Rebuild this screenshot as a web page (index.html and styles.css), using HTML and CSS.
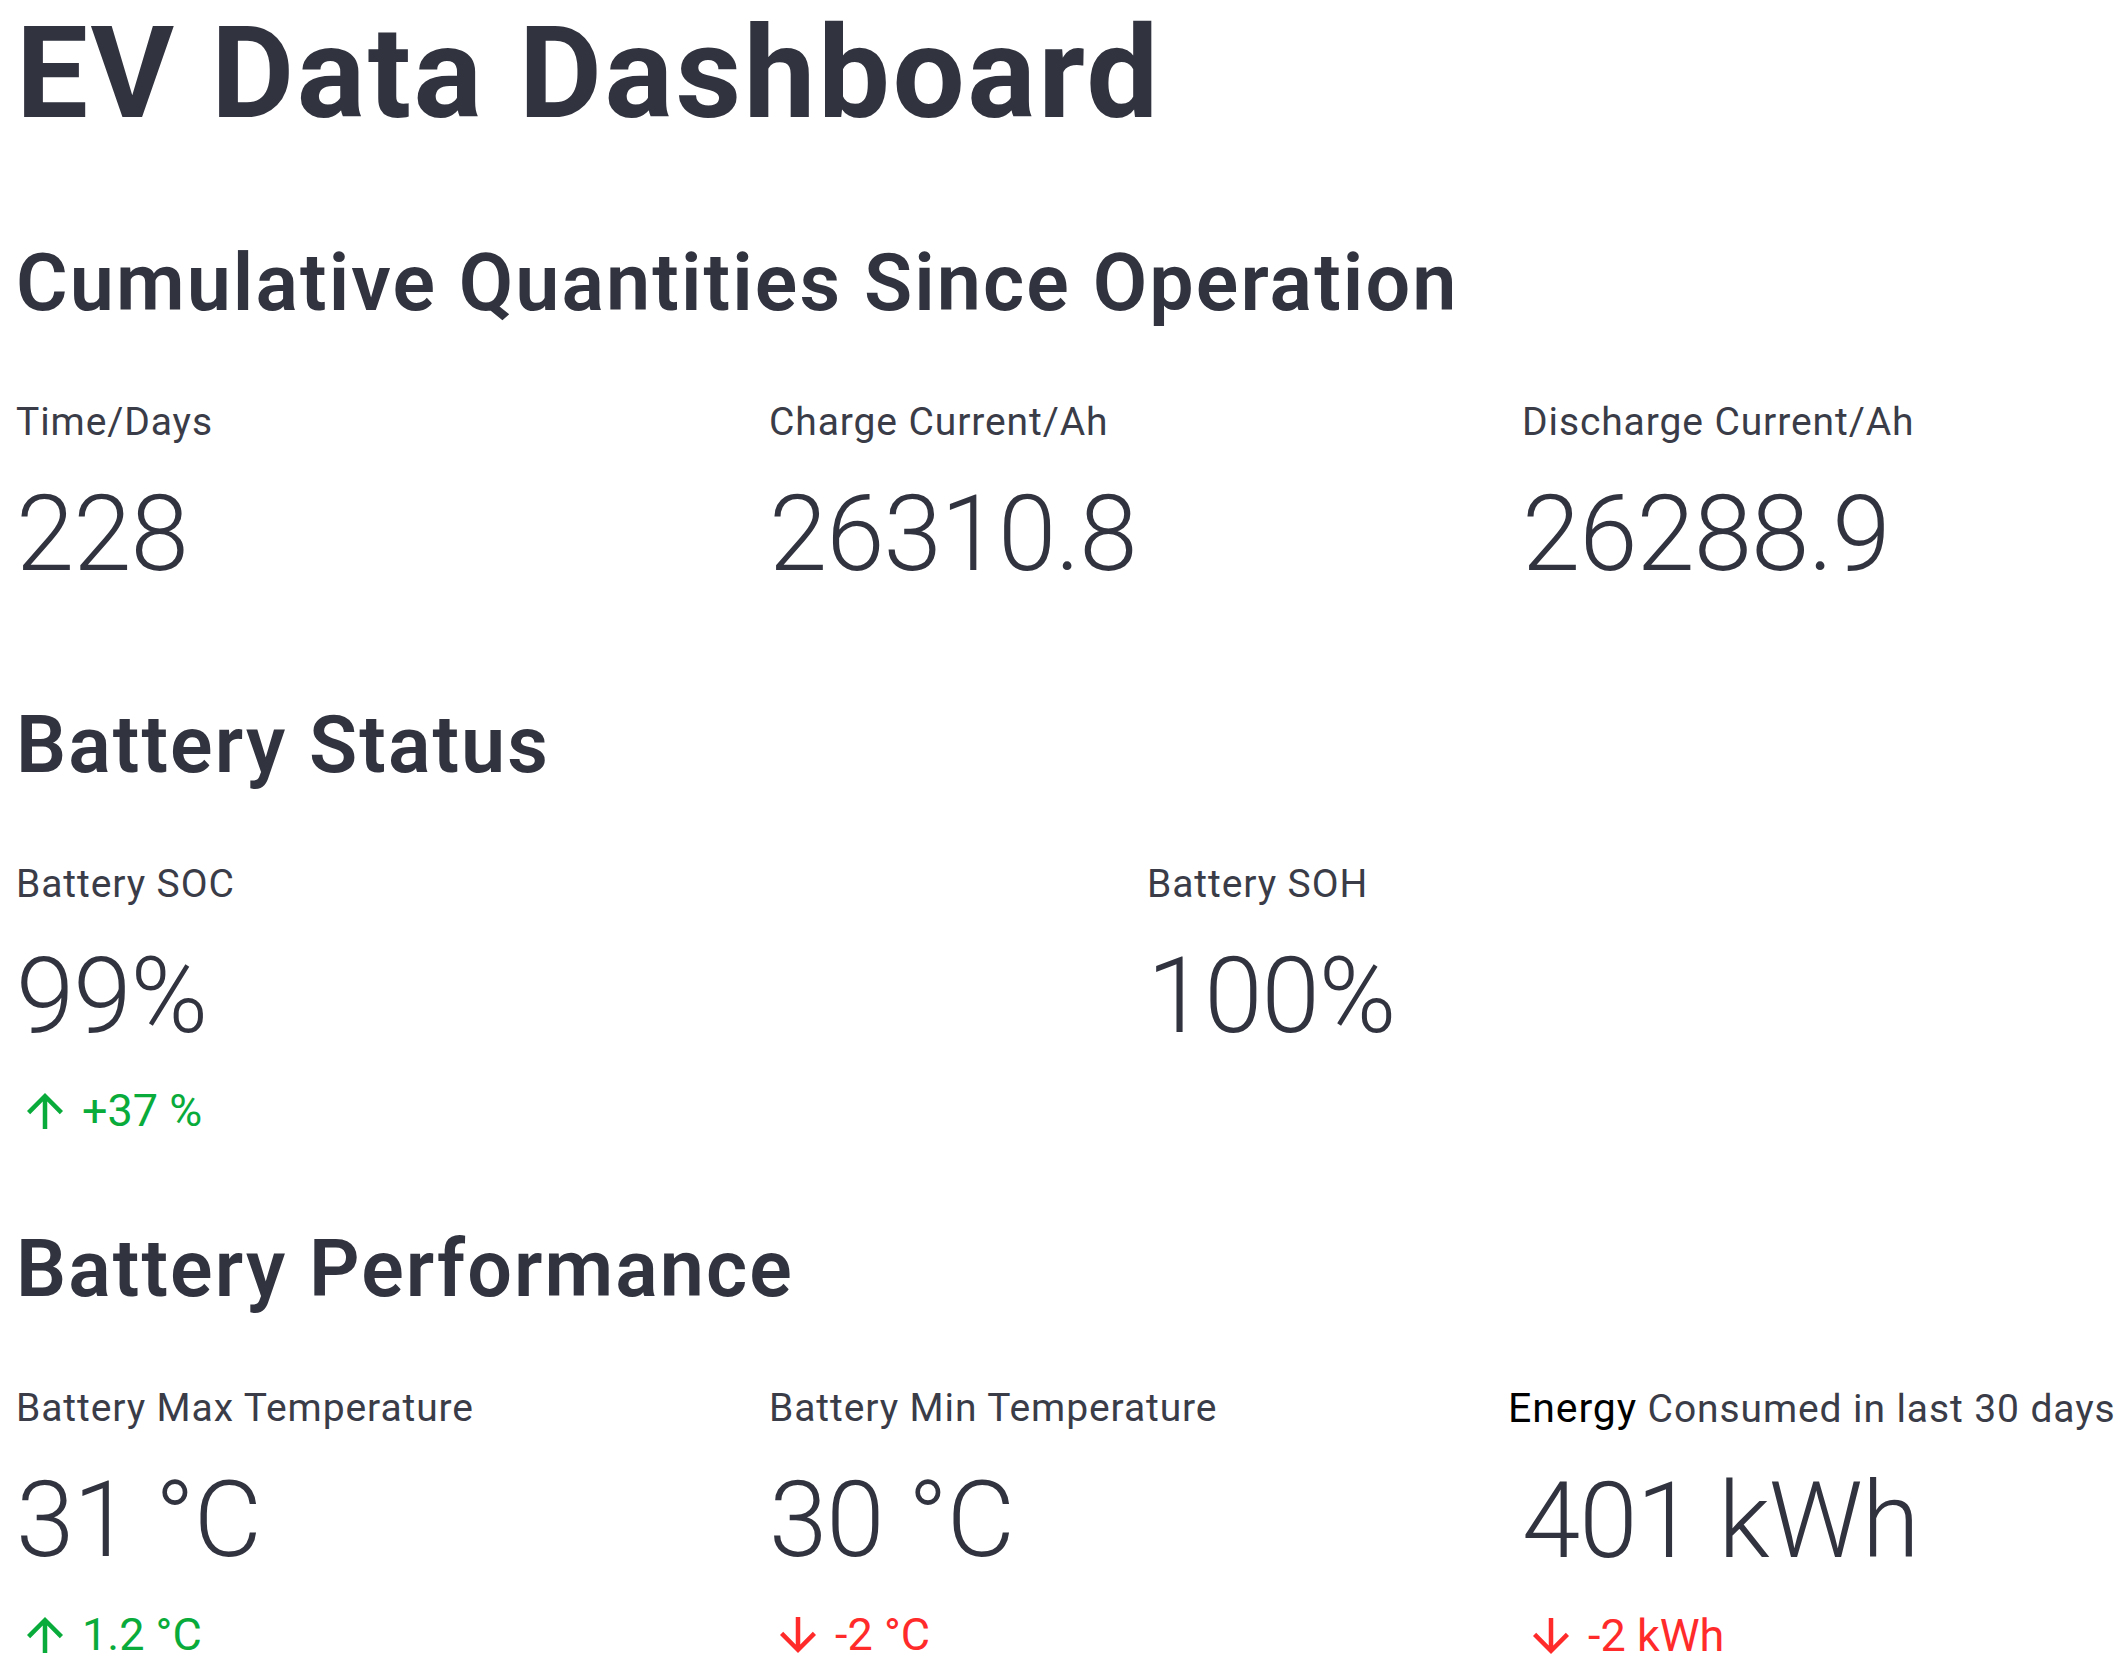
FILE: index.html
```html
<!DOCTYPE html>
<html lang="en">
<head>
<meta charset="utf-8">
<title>EV Data Dashboard</title>
<link rel="stylesheet" href="styles.css">
</head>
<body>
<main class="main">
  <h1 class="title">EV Data Dashboard</h1>

  <h3 class="section">Cumulative Quantities Since Operation</h3>
  <div class="row row-3">
    <div class="metric">
      <div class="label">Time/Days</div>
      <div class="value">228</div>
    </div>
    <div class="metric">
      <div class="label">Charge Current/Ah</div>
      <div class="value">26310.8</div>
    </div>
    <div class="metric">
      <div class="label">Discharge Current/Ah</div>
      <div class="value">26288.9</div>
    </div>
  </div>

  <h3 class="section section-status">Battery Status</h3>
  <div class="row row-2">
    <div class="metric">
      <div class="label">Battery SOC</div>
      <div class="value">99%</div>
      <div class="delta up">
        <svg class="arrow" viewBox="0 0 24 24"><path d="M4 12l1.41 1.41L11 7.83V20h2V7.83l5.58 5.59L20 12l-8-8-8 8z"/></svg>
        <span>+37 %</span>
      </div>
    </div>
    <div class="metric">
      <div class="label">Battery SOH</div>
      <div class="value">100%</div>
    </div>
  </div>

  <h3 class="section section-perf">Battery Performance</h3>
  <div class="row row-3">
    <div class="metric">
      <div class="label">Battery Max Temperature</div>
      <div class="value">31 °C</div>
      <div class="delta up">
        <svg class="arrow" viewBox="0 0 24 24"><path d="M4 12l1.41 1.41L11 7.83V20h2V7.83l5.58 5.59L20 12l-8-8-8 8z"/></svg>
        <span>1.2 °C</span>
      </div>
    </div>
    <div class="metric">
      <div class="label">Battery Min Temperature</div>
      <div class="value">30 °C</div>
      <div class="delta down">
        <svg class="arrow" viewBox="0 0 24 24"><path d="M20 12l-1.41-1.41L13 16.17V4h-2v12.17l-5.58-5.59L4 12l8 8 8-8z"/></svg>
        <span>-2 °C</span>
      </div>
    </div>
    <div class="metric">
      <div class="label label-energy"><span class="energy">Energy</span> Consumed in last 30 days</div>
      <div class="value">401 kWh</div>
      <div class="delta down">
        <svg class="arrow" viewBox="0 0 24 24"><path d="M20 12l-1.41-1.41L13 16.17V4h-2v12.17l-5.58-5.59L4 12l8 8 8-8z"/></svg>
        <span>-2 kWh</span>
      </div>
    </div>
  </div>
</main>
</body>
</html>
```

FILE: styles.css
```css
html, body {
  margin: 0;
  padding: 0;
  background: #ffffff;
  overflow: hidden;
}

body {
  font-family: Roboto, "Liberation Sans", sans-serif;
  color: #31333f;
}

.main {
  padding: 3px 16px 0 16px;
}

.title {
  margin: 0;
  font-size: 128px;
  font-weight: 700;
  line-height: 140px;
  letter-spacing: 2.5px;
}

.section {
  margin: 90px 0 64px 0;
  font-size: 79px;
  font-weight: 600;
  line-height: 100px;
  letter-spacing: 2.1px;
}

.section-status {
  margin-top: 100px;
}

.section-perf {
  margin-top: 80px;
}

.row {
  display: grid;
  column-gap: 16px;
}

.row-3 {
  grid-template-columns: 737px 737px 1fr;
}

.row-2 {
  grid-template-columns: 1115px 1fr;
}

.metric {
  display: flex;
  flex-direction: column;
}

.label {
  font-size: 39px;
  font-weight: 400;
  line-height: 50px;
  letter-spacing: 0.9px;
  color: #3a3c48;
  white-space: nowrap;
}

.label-energy {
  margin-left: -14px;
}

.energy {
  color: #000000;
  font-size: 41px;
}

.value {
  margin-top: 28px;
  font-size: 105px;
  font-weight: 300;
  line-height: 120px;
  letter-spacing: -1px;
  white-space: nowrap;
}

.delta {
  margin-top: 26px;
  display: flex;
  align-items: center;
  gap: 10px;
  font-size: 45px;
  line-height: 56px;
  height: 56px;
  margin-left: 2px;
}

.delta .arrow {
  width: 54px;
  height: 54px;
  flex: none;
}

.up {
  color: #09ab3b;
}

.up .arrow {
  fill: #09ab3b;
}

.down {
  color: #ff2b2b;
}

.down .arrow {
  fill: #ff2b2b;
}
```
